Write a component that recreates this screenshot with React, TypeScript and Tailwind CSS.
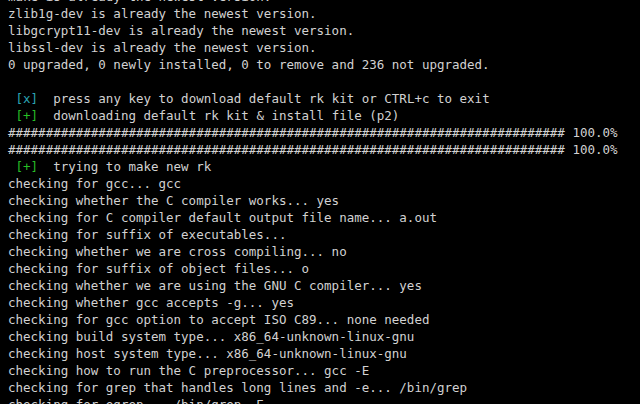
import React from "react";

const hashes = "#".repeat(74);

type Line = { tag?: "x" | "+"; text: string };

const lines: Line[] = [
  { text: "make is already the newest version." },
  { text: "zlib1g-dev is already the newest version." },
  { text: "libgcrypt11-dev is already the newest version." },
  { text: "libssl-dev is already the newest version." },
  { text: "0 upgraded, 0 newly installed, 0 to remove and 236 not upgraded." },
  { text: "" },
  { tag: "x", text: "press any key to download default rk kit or CTRL+c to exit" },
  { tag: "+", text: "downloading default rk kit & install file (p2)" },
  { text: `${hashes} 100.0%` },
  { text: `${hashes} 100.0%` },
  { tag: "+", text: "trying to make new rk" },
  { text: "checking for gcc... gcc" },
  { text: "checking whether the C compiler works... yes" },
  { text: "checking for C compiler default output file name... a.out" },
  { text: "checking for suffix of executables..." },
  { text: "checking whether we are cross compiling... no" },
  { text: "checking for suffix of object files... o" },
  { text: "checking whether we are using the GNU C compiler... yes" },
  { text: "checking whether gcc accepts -g... yes" },
  { text: "checking for gcc option to accept ISO C89... none needed" },
  { text: "checking build system type... x86_64-unknown-linux-gnu" },
  { text: "checking host system type... x86_64-unknown-linux-gnu" },
  { text: "checking how to run the C preprocessor... gcc -E" },
  { text: "checking for grep that handles long lines and -e... /bin/grep" },
  { text: "checking for egrep... /bin/grep -E" },
];

const App = () => {
  return (
    <div className="h-[404px] w-[640px] overflow-hidden bg-black">
      {/* terminal output, scrolled so the first line is cut off */}
      <pre className="mt-[-12px] px-2 font-['DejaVu_Sans_Mono',monospace] text-[12.5px] leading-[17px] text-[#d2d2d2]">
        {lines.map((l, i) => (
          <div key={i} className="h-[17px] whitespace-pre">
            {l.tag ? (
              <>
                {" "}
                <span className={l.tag === "x" ? "text-[#2ba5b5]" : "text-[#27be26]"}>
                  [{l.tag}]
                </span>
                {"  "}
                {l.text}
              </>
            ) : (
              l.text
            )}
          </div>
        ))}
      </pre>
    </div>
  );
};

export default App;
